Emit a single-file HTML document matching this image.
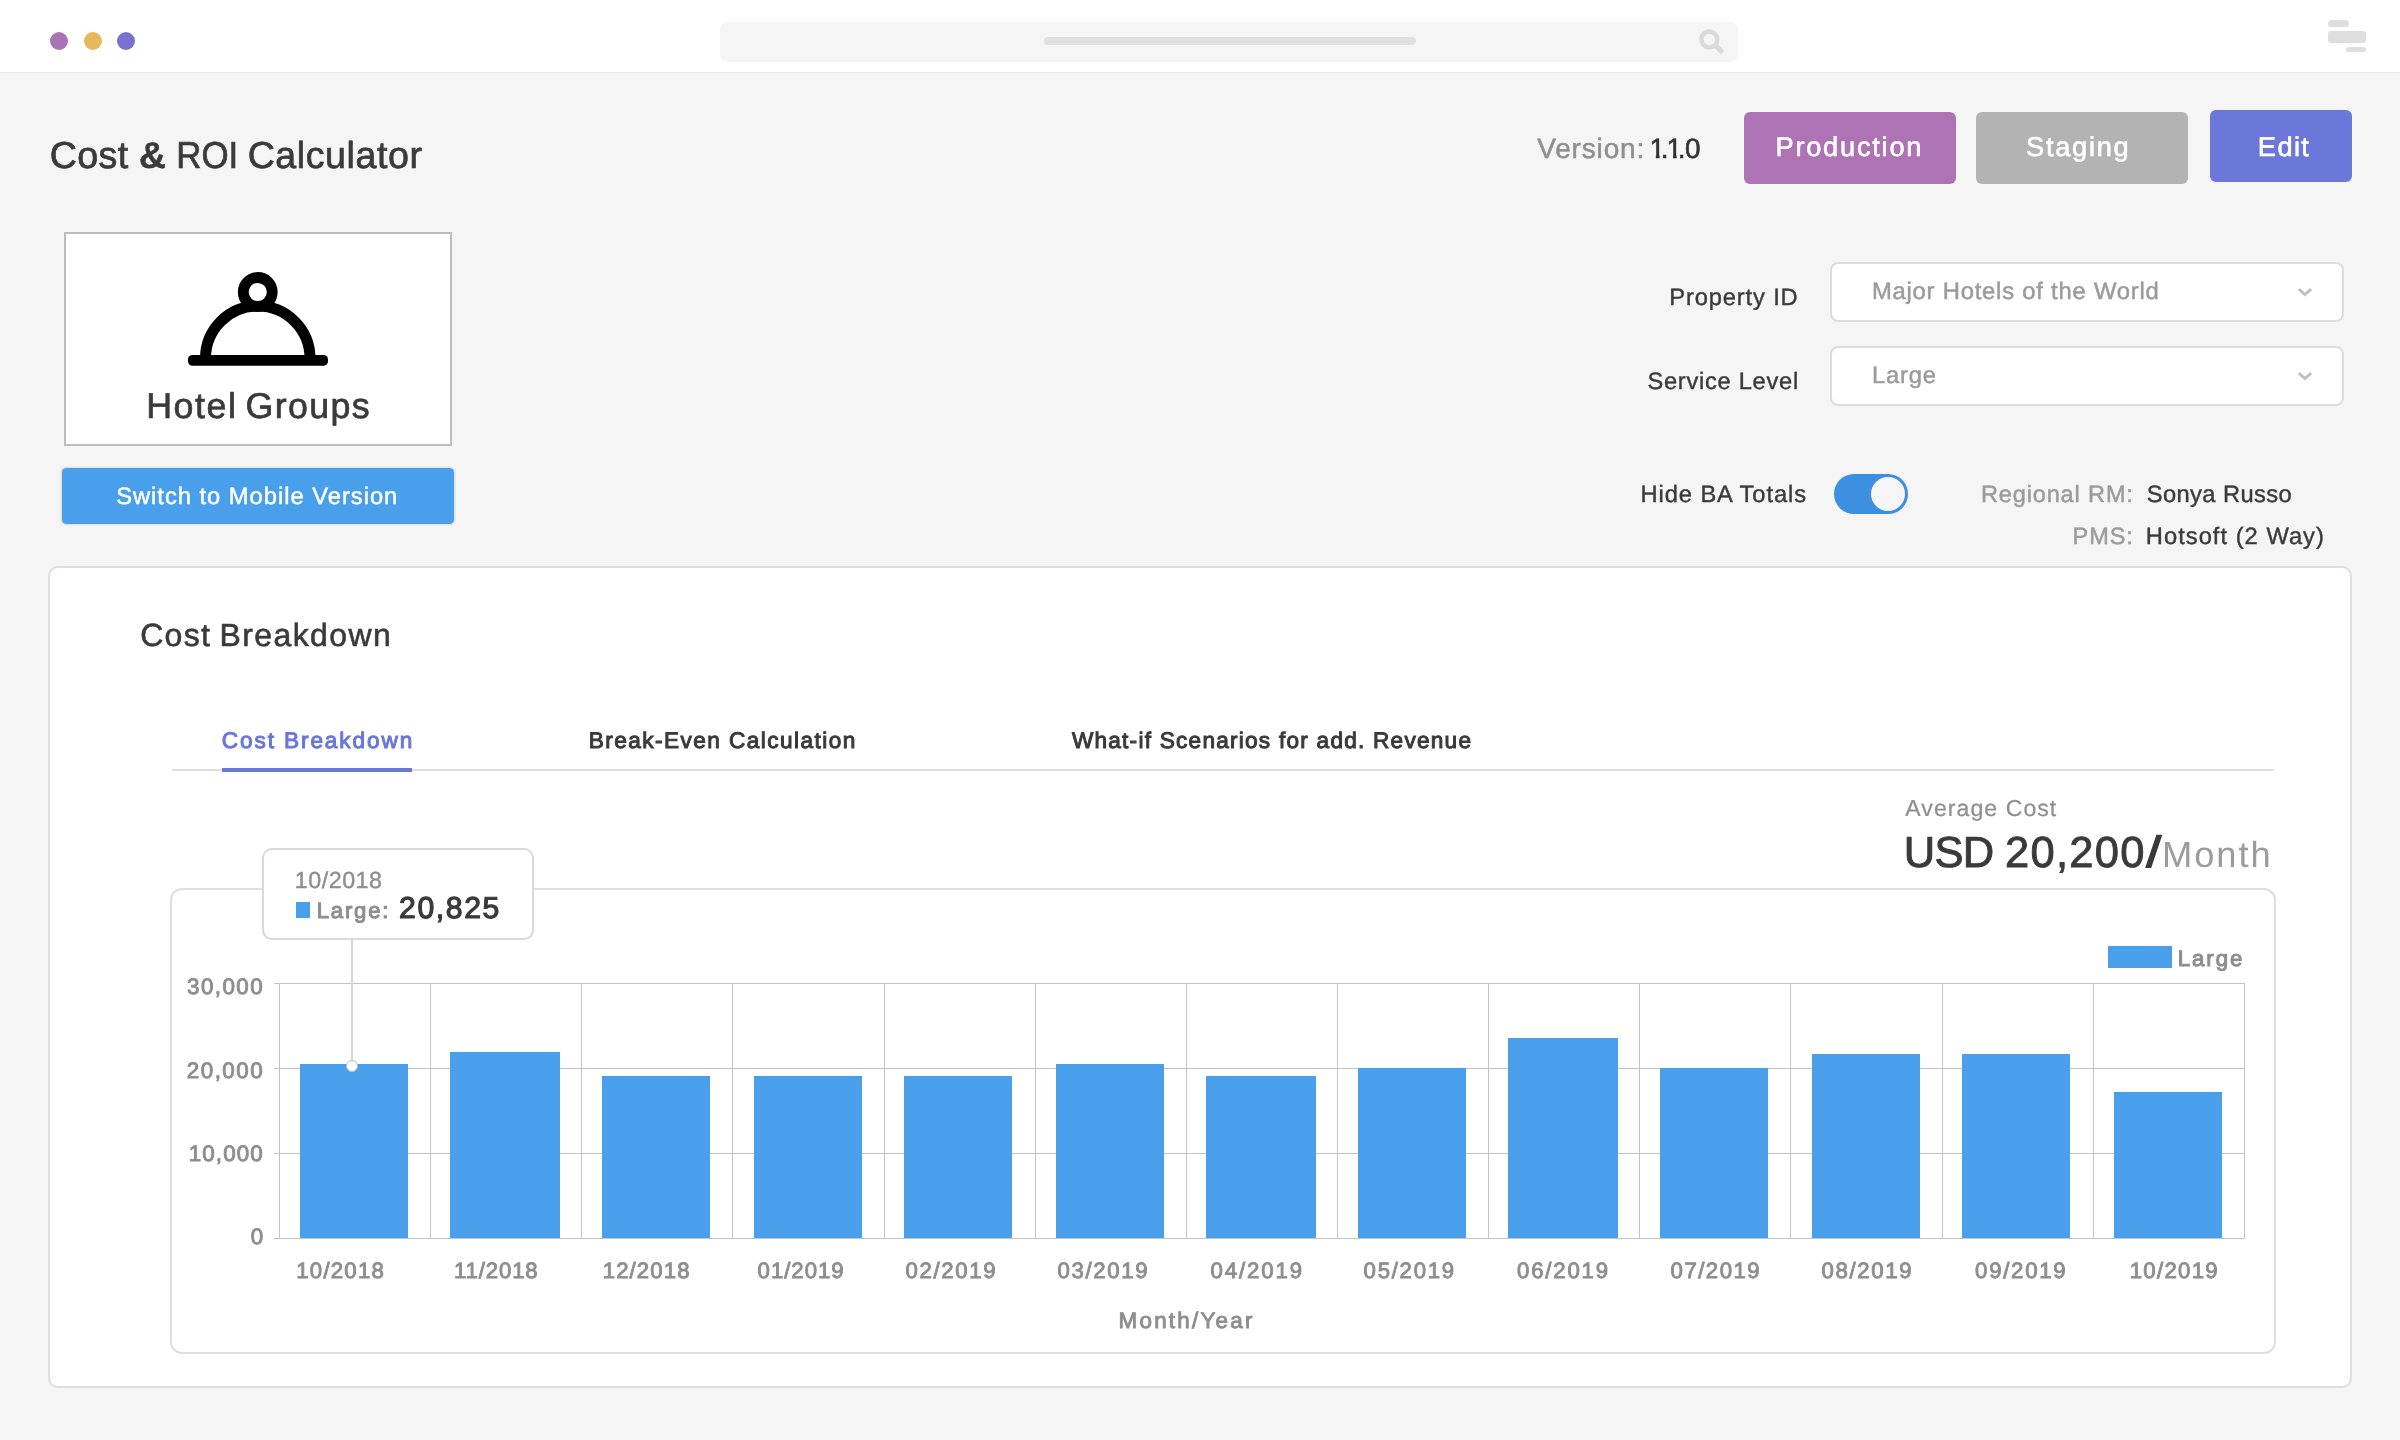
<!DOCTYPE html>
<html lang="en">
<head>
<meta charset="utf-8">
<title>Cost &amp; ROI Calculator</title>
<style>
html,body{margin:0;padding:0;}
body{width:2400px;height:1440px;overflow:hidden;background:#f5f5f5;position:relative;font-family:"Liberation Sans",sans-serif;}
div,span,svg,header,main,section,nav,h1,h2,button,label,ul,li,p,figure,figcaption{position:absolute;box-sizing:border-box;margin:0;padding:0;}
.g,.tx{left:0;top:0;width:0;height:0;border:0;background:none;font:inherit;list-style:none;}
.tx{will-change:transform;text-rendering:geometricPrecision;}
.t{white-space:nowrap;}
.topbar{left:0;top:0;width:2400px;height:73px;background:#fff;border-bottom:1.5px solid #e9e9e9;}
.dot{width:18px;height:18px;border-radius:50%;top:32px;}
.search{left:720px;top:22px;width:1018px;height:40px;border-radius:8px;background:#f5f5f5;}
.searchline{left:1044px;top:37px;width:372px;height:8px;border-radius:4px;background:#e0e0e0;}
.btn{border-radius:6px;}
.card{left:64px;top:232px;width:388px;height:214px;background:#fff;border:2px solid #bdbdbd;}
.mobile{left:62px;top:468px;width:392px;height:56px;border-radius:4.5px;background:#4a9feb;box-shadow:0 0 0 1.6px #e4e1dc;}
.sel{left:1830px;width:514px;height:60px;border-radius:8px;background:#fff;border:2px solid #dcdcdc;}
.toggle{left:1834px;top:474px;width:74px;height:40px;border-radius:20px;background:#3d8fe0;}
.knob{left:1871px;top:477px;width:34px;height:34px;border-radius:50%;background:#f5f5f5;}
.panel{left:48px;top:566px;width:2304px;height:822px;border-radius:10px;background:#fff;border:2px solid #dedede;}
.tabline{left:172px;top:769px;width:2102px;height:2px;background:#dedede;}
.tabul{left:222px;top:768px;width:190px;height:4px;background:#6b77d9;}
.chartbox{left:170px;top:888px;width:2106px;height:466px;border-radius:12px;background:#fff;border:2px solid #dedede;}
.tip{left:262px;top:848px;width:272px;height:92px;border-radius:10px;background:#fff;border:2px solid #d9d9d9;}
.gl{background:#c4c4c4;}
.bar{background:#4a9feb;}
</style>
</head>
<body>

<!-- window chrome -->
<header class="g">
  <div class="topbar"></div>
  <div class="dot" style="left:50px;background:#a974b3"></div>
  <div class="dot" style="left:83.5px;background:#e5b95c"></div>
  <div class="dot" style="left:117px;background:#7b72d0"></div>
  <div class="search"></div>
  <div class="searchline"></div>
  <svg style="left:1694px;top:24px" width="36" height="36" viewBox="0 0 36 36"><circle cx="15.3" cy="15.5" r="8" fill="none" stroke="#dadada" stroke-width="4.5"/><path d="M21.5 21.5 L28.5 28.5" stroke="#dadada" stroke-width="5" stroke-linecap="butt"/></svg>
  <div style="left:2328px;top:20px;width:20.5px;height:6.5px;border-radius:3.25px;background:#dedede"></div>
  <div style="left:2328px;top:31px;width:38px;height:11.5px;border-radius:3px;background:#dedede"></div>
  <div style="left:2345.5px;top:47px;width:20.5px;height:5px;border-radius:2.5px;background:#dedede"></div>
</header>

<main class="g">

<!-- page title row -->
<section class="g">
  <h1 class="tx">
<span class="t" style="left:49.74px;top:133px;font-size:37.6px;line-height:45px;font-weight:400;color:#3a3a3a;letter-spacing:0.401px;-webkit-text-stroke:0.7px #3a3a3a;">Cost </span><span class="t" style="left:139.06px;top:133px;font-size:37.4px;line-height:45px;font-weight:700;color:#3a3a3a;-webkit-text-stroke:0.4px #3a3a3a;">&amp; </span><span class="t" style="left:176.47px;top:133px;font-size:37.6px;line-height:45px;font-weight:400;color:#3a3a3a;transform:scaleX(0.9285);transform-origin:2.73px 0;-webkit-text-stroke:0.7px #3a3a3a;">ROI </span><span class="t" style="left:247.64px;top:133px;font-size:37.6px;line-height:45px;font-weight:400;color:#3a3a3a;letter-spacing:0.572px;-webkit-text-stroke:0.7px #3a3a3a;">Calculator</span>
  </h1>
  <p class="tx">
<span class="t" style="left:1537.23px;top:132px;font-size:28.0px;line-height:34px;font-weight:400;color:#8e8e8e;letter-spacing:0.844px;-webkit-text-stroke:0.5px #8e8e8e;">Version:</span> <span class="t" style="left:1649.47px;top:132px;font-size:27.9px;line-height:33px;font-weight:400;color:#333;-webkit-text-stroke:0.6px #333;clip-path:polygon(0 0,10.08px 0,10.08px 100%,6.42px 100%,6.42px 22.42px,0 22.42px);">1</span><span class="t" style="left:1660.75px;top:132px;font-size:27.9px;line-height:33px;font-weight:400;color:#333;-webkit-text-stroke:0.6px #333;">.</span><span class="t" style="left:1666.57px;top:132px;font-size:27.9px;line-height:33px;font-weight:400;color:#333;-webkit-text-stroke:0.6px #333;clip-path:polygon(0 0,10.08px 0,10.08px 100%,6.42px 100%,6.42px 22.42px,0 22.42px);">1</span><span class="t" style="left:1677.75px;top:132px;font-size:27.9px;line-height:33px;font-weight:400;color:#333;-webkit-text-stroke:0.6px #333;">.</span><span class="t" style="left:1685.01px;top:132px;font-size:27.9px;line-height:33px;font-weight:400;color:#333;-webkit-text-stroke:0.6px #333;">0</span>
  </p>
  <button class="g"><span class="btn" style="left:1744px;top:112px;width:212px;height:72px;background:#ad73b5"></span><span class="tx">
<span class="t" style="left:1775.47px;top:130px;font-size:27.2px;line-height:33px;font-weight:400;color:#ffffff;letter-spacing:1.779px;-webkit-text-stroke:0.6px #ffffff;">Production</span>
  </span></button>
  <button class="g"><span class="btn" style="left:1976px;top:112px;width:212px;height:72px;background:#b3b3b3"></span><span class="tx">
<span class="t" style="left:2026.06px;top:130px;font-size:27.2px;line-height:33px;font-weight:400;color:#ffffff;letter-spacing:1.745px;-webkit-text-stroke:0.6px #ffffff;">Staging</span>
  </span></button>
  <button class="g"><span class="btn" style="left:2210px;top:110px;width:142px;height:72px;background:#6b77d9"></span><span class="tx">
<span class="t" style="left:2257.87px;top:130px;font-size:27.2px;line-height:33px;font-weight:400;color:#ffffff;letter-spacing:1.390px;-webkit-text-stroke:0.6px #ffffff;">Edit</span>
  </span></button>
</section>

<!-- hotel group card -->
<section class="g">
  <figure class="g">
    <div class="card"></div>
    <svg style="left:180px;top:264px" width="156" height="110" viewBox="180 264 156 110">
      <path d="M205.5 358.3 A52.25 52.25 0 0 1 310 358.3" fill="none" stroke="#000" stroke-width="11"/>
      <circle cx="257.75" cy="292" r="14.5" fill="#fff" stroke="#000" stroke-width="10.8"/>
      <rect x="188" y="355" width="140" height="10.75" rx="4.5" fill="#000"/>
    </svg>
    <figcaption class="tx">
<span class="t" style="left:146.21px;top:385px;font-size:35.8px;line-height:43px;font-weight:400;color:#3a3a3a;letter-spacing:1.563px;-webkit-text-stroke:0.7px #3a3a3a;">Hotel </span><span class="t" style="left:245.55px;top:385px;font-size:35.8px;line-height:43px;font-weight:400;color:#3a3a3a;letter-spacing:1.321px;-webkit-text-stroke:0.7px #3a3a3a;">Groups</span>
    </figcaption>
  </figure>
  <button class="g"><span class="mobile"></span><span class="tx">
<span class="t" style="left:116.15px;top:483px;font-size:23.7px;line-height:28px;font-weight:400;color:#ffffff;letter-spacing:1.004px;-webkit-text-stroke:0.45px #ffffff;">Switch to Mobile Version</span>
  </span></button>
</section>

<!-- filters -->
<section class="g">
  <div class="g">
    <label class="tx">
<span class="t" style="left:1669.26px;top:284px;font-size:23.7px;line-height:28px;font-weight:400;color:#3a3a3a;letter-spacing:0.868px;-webkit-text-stroke:0.4px #3a3a3a;">Property ID</span>
    </label>
    <div class="sel" style="top:262px"></div>
    <span class="tx">
<span class="t" style="left:1871.90px;top:277px;font-size:23.8px;line-height:29px;font-weight:400;color:#9b9b9b;letter-spacing:0.785px;-webkit-text-stroke:0.5px #9b9b9b;">Major Hotels of the World</span>
    </span>
    <svg style="left:2294px;top:284px" width="24" height="16" viewBox="0 0 24 16"><path d="M4.9 5.2 L11 10.6 L17.1 5.2" fill="none" stroke="#c0c0c2" stroke-width="3" stroke-linecap="butt" stroke-linejoin="miter"/></svg>
  </div>
  <div class="g">
    <label class="tx">
<span class="t" style="left:1647.42px;top:368px;font-size:23.7px;line-height:28px;font-weight:400;color:#3a3a3a;letter-spacing:0.713px;-webkit-text-stroke:0.4px #3a3a3a;">Service Level</span>
    </label>
    <div class="sel" style="top:346px"></div>
    <span class="tx">
<span class="t" style="left:1871.90px;top:361px;font-size:23.8px;line-height:29px;font-weight:400;color:#9b9b9b;letter-spacing:0.834px;-webkit-text-stroke:0.5px #9b9b9b;">Large</span>
    </span>
    <svg style="left:2294px;top:368px" width="24" height="16" viewBox="0 0 24 16"><path d="M4.9 5.2 L11 10.6 L17.1 5.2" fill="none" stroke="#c0c0c2" stroke-width="3" stroke-linecap="butt" stroke-linejoin="miter"/></svg>
  </div>
  <div class="g">
    <label class="tx">
<span class="t" style="left:1640.56px;top:481px;font-size:23.7px;line-height:28px;font-weight:400;color:#3a3a3a;letter-spacing:0.913px;-webkit-text-stroke:0.4px #3a3a3a;">Hide BA Totals</span>
    </label>
    <div class="toggle"></div><div class="knob"></div>
  </div>
  <p class="tx">
<span class="t" style="left:1980.92px;top:480px;font-size:23.5px;line-height:28px;font-weight:400;color:#9b9b9b;letter-spacing:0.873px;-webkit-text-stroke:0.5px #9b9b9b;">Regional RM:</span>
<span class="t" style="left:2146.72px;top:481px;font-size:23.7px;line-height:28px;font-weight:400;color:#3a3a3a;letter-spacing:0.408px;-webkit-text-stroke:0.4px #3a3a3a;">Sonya Russo</span>
  </p>
  <p class="tx">
<span class="t" style="left:2072.62px;top:522px;font-size:23.5px;line-height:28px;font-weight:400;color:#9b9b9b;letter-spacing:0.935px;-webkit-text-stroke:0.5px #9b9b9b;">PMS:</span>
<span class="t" style="left:2145.86px;top:523px;font-size:23.7px;line-height:28px;font-weight:400;color:#3a3a3a;letter-spacing:1.026px;-webkit-text-stroke:0.4px #3a3a3a;">Hotsoft (2 Way)</span>
  </p>
</section>

<!-- cost breakdown panel -->
<section class="g">
  <div class="panel"></div>
  <h2 class="tx">
<span class="t" style="left:140.18px;top:616px;font-size:32.0px;line-height:38px;font-weight:400;color:#3a3a3a;letter-spacing:1.321px;-webkit-text-stroke:0.6px #3a3a3a;">Cost </span><span class="t" style="left:219.58px;top:616px;font-size:32.0px;line-height:38px;font-weight:400;color:#3a3a3a;letter-spacing:1.389px;-webkit-text-stroke:0.6px #3a3a3a;">Breakdown</span>
  </h2>
  <nav class="g">
    <div class="tabline"></div><div class="tabul"></div>
    <ul class="g">
      <li class="tx">
<span class="t" style="left:221.75px;top:727px;font-size:22.6px;line-height:27px;font-weight:400;color:#6b77d9;letter-spacing:1.903px;-webkit-text-stroke:1.0px #6b77d9;">Cost Breakdown</span>
      </li>
      <li class="tx">
<span class="t" style="left:588.65px;top:727px;font-size:22.6px;line-height:27px;font-weight:400;color:#3a3a3a;letter-spacing:1.458px;-webkit-text-stroke:1.0px #3a3a3a;">Break-Even Calculation</span>
      </li>
      <li class="tx">
<span class="t" style="left:1071.90px;top:727px;font-size:22.6px;line-height:27px;font-weight:400;color:#3a3a3a;letter-spacing:1.248px;-webkit-text-stroke:1.0px #3a3a3a;">What-if Scenarios for add. Revenue</span>
      </li>
    </ul>
  </nav>
  <div class="g">
    <p class="tx">
<span class="t" style="left:1905.35px;top:794px;font-size:23.1px;line-height:28px;font-weight:400;color:#8e8e8e;letter-spacing:1.038px;-webkit-text-stroke:0.2px #8e8e8e;">Average Cost</span>
    </p>
    <p class="tx">
<span class="t" style="left:1903.79px;top:827px;font-size:43.5px;line-height:52px;font-weight:400;color:#3a3a3a;letter-spacing:-0.753px;-webkit-text-stroke:0.9px #3a3a3a;">USD </span><span class="t" style="left:2004.96px;top:827px;font-size:43.5px;line-height:52px;font-weight:400;color:#3a3a3a;letter-spacing:1.305px;-webkit-text-stroke:0.9px #3a3a3a;">20,200</span><span class="t" style="left:2145.70px;top:827px;font-size:43.5px;line-height:52px;font-weight:400;color:#3a3a3a;-webkit-text-stroke:1.4px #3a3a3a;transform:scaleX(1.238);transform-origin:-0.70px 0;">/</span><span class="t" style="left:2162.02px;top:833px;font-size:36.3px;line-height:44px;font-weight:400;color:#9b9b9b;letter-spacing:1.936px;">Month</span>
    </p>
  </div>
  <figure class="g">
    <div class="chartbox"></div>
    <div class="g">
<div class="gl" style="left:273.5px;top:983px;width:1971.5px;height:1px"></div>
<div class="gl" style="left:273.5px;top:1068px;width:1971.5px;height:1px"></div>
<div class="gl" style="left:273.5px;top:1153px;width:1971.5px;height:1px"></div>
<div class="gl" style="left:273.5px;top:1238px;width:1971.5px;height:1px"></div>
<div class="gl" style="left:279px;top:983px;width:1px;height:256px"></div>
<div class="gl" style="left:430px;top:983px;width:1px;height:256px"></div>
<div class="gl" style="left:581px;top:983px;width:1px;height:256px"></div>
<div class="gl" style="left:732px;top:983px;width:1px;height:256px"></div>
<div class="gl" style="left:884px;top:983px;width:1px;height:256px"></div>
<div class="gl" style="left:1035px;top:983px;width:1px;height:256px"></div>
<div class="gl" style="left:1186px;top:983px;width:1px;height:256px"></div>
<div class="gl" style="left:1337px;top:983px;width:1px;height:256px"></div>
<div class="gl" style="left:1488px;top:983px;width:1px;height:256px"></div>
<div class="gl" style="left:1639px;top:983px;width:1px;height:256px"></div>
<div class="gl" style="left:1790px;top:983px;width:1px;height:256px"></div>
<div class="gl" style="left:1942px;top:983px;width:1px;height:256px"></div>
<div class="gl" style="left:2093px;top:983px;width:1px;height:256px"></div>
<div class="gl" style="left:2244px;top:983px;width:1px;height:256px"></div>
<div class="bar" style="left:300px;top:1064px;width:108px;height:173.7px"></div>
<div class="bar" style="left:450px;top:1052px;width:110px;height:185.7px"></div>
<div class="bar" style="left:602px;top:1076px;width:108px;height:161.7px"></div>
<div class="bar" style="left:754px;top:1076px;width:108px;height:161.7px"></div>
<div class="bar" style="left:904px;top:1076px;width:108px;height:161.7px"></div>
<div class="bar" style="left:1056px;top:1064px;width:108px;height:173.7px"></div>
<div class="bar" style="left:1206px;top:1076px;width:110px;height:161.7px"></div>
<div class="bar" style="left:1358px;top:1068px;width:108px;height:169.7px"></div>
<div class="bar" style="left:1508px;top:1038px;width:110px;height:199.7px"></div>
<div class="bar" style="left:1660px;top:1068px;width:108px;height:169.7px"></div>
<div class="bar" style="left:1812px;top:1054px;width:108px;height:183.7px"></div>
<div class="bar" style="left:1962px;top:1054px;width:108px;height:183.7px"></div>
<div class="bar" style="left:2114px;top:1092px;width:108px;height:145.7px"></div>
    </div>
    <div class="g">
      <div class="bar" style="left:2108px;top:946px;width:64px;height:22px"></div>
      <span class="tx">
<span class="t" style="left:2177.67px;top:945px;font-size:22.3px;line-height:27px;font-weight:400;color:#8e8e8e;letter-spacing:1.947px;-webkit-text-stroke:1.0px #8e8e8e;">Large</span>
      </span>
    </div>
    <div class="tx">
<span class="t" style="left:187.10px;top:973px;font-size:22.4px;line-height:27px;font-weight:400;color:#8e8e8e;letter-spacing:1.419px;-webkit-text-stroke:0.9px #8e8e8e;">30,000</span>
<span class="t" style="left:186.82px;top:1057px;font-size:22.4px;line-height:27px;font-weight:400;color:#8e8e8e;letter-spacing:1.473px;-webkit-text-stroke:0.9px #8e8e8e;">20,000</span>
<span class="t" style="left:188.74px;top:1140px;font-size:22.4px;line-height:27px;font-weight:400;color:#8e8e8e;letter-spacing:1.089px;-webkit-text-stroke:0.9px #8e8e8e;">10,000</span>
<span class="t" style="left:250.77px;top:1223px;font-size:22.4px;line-height:27px;font-weight:400;color:#8e8e8e;-webkit-text-stroke:0.9px #8e8e8e;">0</span>
    </div>
    <div class="tx">
<span class="t" style="left:296.26px;top:1257px;font-size:22.2px;line-height:27px;font-weight:400;color:#8e8e8e;letter-spacing:1.225px;-webkit-text-stroke:0.9px #8e8e8e;">10/2018</span>
<span class="t" style="left:454.06px;top:1257px;font-size:22.2px;line-height:27px;font-weight:400;color:#8e8e8e;letter-spacing:0.849px;-webkit-text-stroke:0.9px #8e8e8e;">11/2018</span>
<span class="t" style="left:602.76px;top:1257px;font-size:22.2px;line-height:27px;font-weight:400;color:#8e8e8e;letter-spacing:1.092px;-webkit-text-stroke:0.9px #8e8e8e;">12/2018</span>
<span class="t" style="left:757.58px;top:1257px;font-size:22.2px;line-height:27px;font-weight:400;color:#8e8e8e;letter-spacing:0.969px;-webkit-text-stroke:0.9px #8e8e8e;">01/2019</span>
<span class="t" style="left:905.58px;top:1257px;font-size:22.2px;line-height:27px;font-weight:400;color:#8e8e8e;letter-spacing:1.636px;-webkit-text-stroke:0.9px #8e8e8e;">02/2019</span>
<span class="t" style="left:1057.58px;top:1257px;font-size:22.2px;line-height:27px;font-weight:400;color:#8e8e8e;letter-spacing:1.636px;-webkit-text-stroke:0.9px #8e8e8e;">03/2019</span>
<span class="t" style="left:1210.58px;top:1257px;font-size:22.2px;line-height:27px;font-weight:400;color:#8e8e8e;letter-spacing:1.886px;-webkit-text-stroke:0.9px #8e8e8e;">04/2019</span>
<span class="t" style="left:1363.58px;top:1257px;font-size:22.2px;line-height:27px;font-weight:400;color:#8e8e8e;letter-spacing:1.719px;-webkit-text-stroke:0.9px #8e8e8e;">05/2019</span>
<span class="t" style="left:1517.08px;top:1257px;font-size:22.2px;line-height:27px;font-weight:400;color:#8e8e8e;letter-spacing:1.803px;-webkit-text-stroke:0.9px #8e8e8e;">06/2019</span>
<span class="t" style="left:1670.58px;top:1257px;font-size:22.2px;line-height:27px;font-weight:400;color:#8e8e8e;letter-spacing:1.469px;-webkit-text-stroke:0.9px #8e8e8e;">07/2019</span>
<span class="t" style="left:1821.58px;top:1257px;font-size:22.2px;line-height:27px;font-weight:400;color:#8e8e8e;letter-spacing:1.636px;-webkit-text-stroke:0.9px #8e8e8e;">08/2019</span>
<span class="t" style="left:1975.08px;top:1257px;font-size:22.2px;line-height:27px;font-weight:400;color:#8e8e8e;letter-spacing:1.719px;-webkit-text-stroke:0.9px #8e8e8e;">09/2019</span>
<span class="t" style="left:2129.76px;top:1257px;font-size:22.2px;line-height:27px;font-weight:400;color:#8e8e8e;letter-spacing:1.273px;-webkit-text-stroke:0.9px #8e8e8e;">10/2019</span>
    </div>
    <div class="tx">
<span class="t" style="left:1118.61px;top:1307px;font-size:22.4px;line-height:27px;font-weight:400;color:#8e8e8e;letter-spacing:2.234px;-webkit-text-stroke:0.9px #8e8e8e;">Month/Year</span>
    </div>
    <div class="g">
      <div style="left:351.3px;top:939px;width:1.7px;height:122px;background:#d6d6d6"></div>
      <div style="left:346.1px;top:1060.1px;width:11.8px;height:11.8px;border-radius:50%;background:#fff;border:1.8px solid #bcbcbc"></div>
      <div class="tip"></div>
      <div class="bar" style="left:296.25px;top:902px;width:13.75px;height:16px"></div>
      <div class="tx">
<span class="t" style="left:294.68px;top:866px;font-size:23.3px;line-height:28px;font-weight:400;color:#8e8e8e;letter-spacing:0.528px;-webkit-text-stroke:0.4px #8e8e8e;">10/2018</span>
<span class="t" style="left:316.79px;top:897px;font-size:22.1px;line-height:27px;font-weight:400;color:#8e8e8e;letter-spacing:1.795px;-webkit-text-stroke:1.0px #8e8e8e;">Large:</span>
<span class="t" style="left:399.08px;top:891px;font-size:30.2px;line-height:36px;font-weight:400;color:#3a3a3a;letter-spacing:1.599px;-webkit-text-stroke:1.2px #3a3a3a;">20,825</span>
      </div>
    </div>
  </figure>
</section>

</main>
</body>
</html>
